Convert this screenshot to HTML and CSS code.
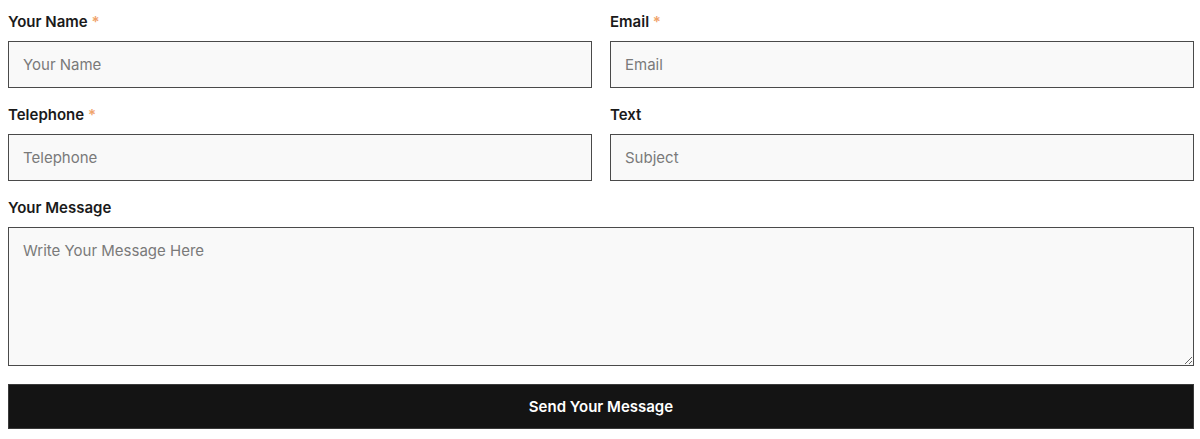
FILE: index.html
```html
<!DOCTYPE html>
<html>
<head>
<meta charset="utf-8">
<link rel="stylesheet" href="styles.css">
</head>
<body>
<form class="form">
  <div class="grid">
    <div class="field">
      <label class="label">Your Name <span class="req">*</span></label>
      <input class="input" type="text" placeholder="Your Name">
    </div>
    <div class="field">
      <label class="label">Email <span class="req">*</span></label>
      <input class="input" type="text" placeholder="Email">
    </div>
    <div class="field">
      <label class="label">Telephone <span class="req">*</span></label>
      <input class="input" type="text" placeholder="Telephone">
    </div>
    <div class="field">
      <label class="label">Text</label>
      <input class="input" type="text" placeholder="Subject">
    </div>
    <div class="field full">
      <label class="label">Your Message</label>
      <textarea class="textarea" placeholder="Write Your Message Here"></textarea>
    </div>
  </div>
  <button class="btn" type="button">Send Your Message</button>
</form>
</body>
</html>
```
FILE: styles.css
```css
html, body {
  margin: 0;
  padding: 0;
  background: #fff;
}
body {
  font-family: Inter, "Noto Sans", sans-serif;
}
.form {
  width: 1186px;
  padding: 11px 0 0 8px;
}
.grid {
  display: grid;
  grid-template-columns: 584px 584px;
  column-gap: 18px;
  row-gap: 16px;
}
.field {
  display: flex;
  flex-direction: column;
}
.full {
  grid-column: 1 / 3;
}
.label {
  font-size: 15px;
  font-weight: 600;
  line-height: 22px;
  color: #1a1a1a;
  margin-bottom: 8px;
}
.req {
  color: #f0a36b;
}
.input, .textarea {
  box-sizing: border-box;
  width: 100%;
  border: 1px solid #4a4a4a;
  background: #f9f9f9;
  font-family: Inter, "Noto Sans", sans-serif;
  font-size: 15px;
  color: #333;
  padding: 0 14px;
  margin: 0;
  border-radius: 0;
  outline: none;
}
.input {
  height: 47px;
}
.textarea {
  height: 139px;
  padding-top: 13px;
  resize: vertical;
  display: block;
}
.input::placeholder, .textarea::placeholder {
  color: #7a7a7a;
}
.btn {
  display: block;
  box-sizing: border-box;
  width: 100%;
  height: 45px;
  margin-top: 18px;
  background: #141414;
  color: #fff;
  border: 1px solid #3a3a3a;
  font-family: Inter, "Noto Sans", sans-serif;
  font-size: 15px;
  font-weight: 600;
  cursor: pointer;
}
```
